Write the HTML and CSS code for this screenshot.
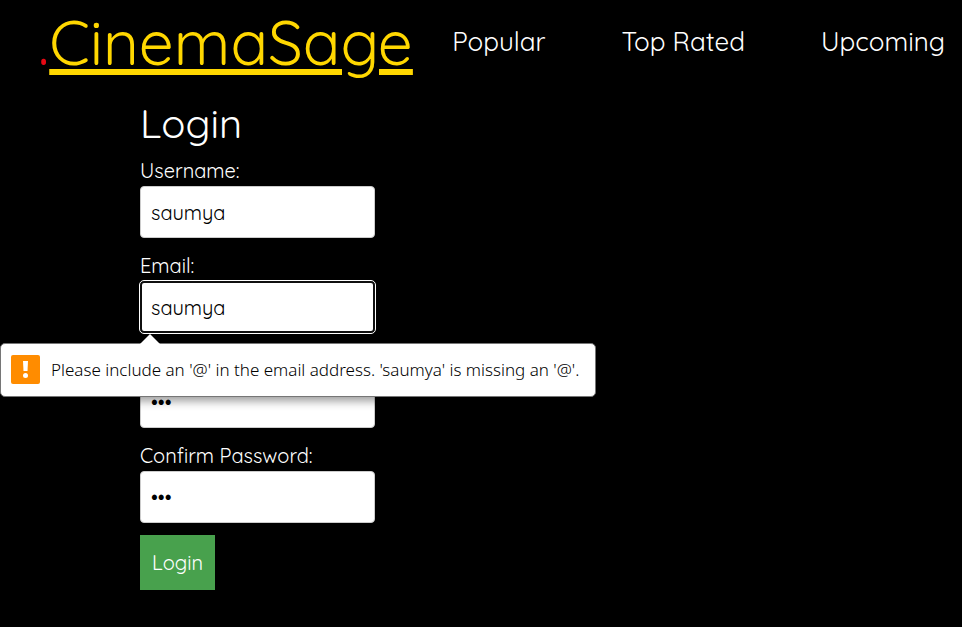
FILE: index.html
```html
<!DOCTYPE html>
<html lang="en">
<head>
<meta charset="utf-8">
<meta name="viewport" content="width=device-width, initial-scale=1">
<title>CinemaSage</title>
<link rel="stylesheet" href="styles.css">
</head>
<body>
<header class="header">
  <div class="brand"><span class="brand-dot">.</span><a class="brand-link" href="#">CinemaSage</a></div>
  <nav class="nav">
    <a href="#">Popular</a>
    <a href="#">Top Rated</a>
    <a href="#">Upcoming</a>
  </nav>
</header>
<main class="main">
  <h1 class="title">Login</h1>
  <form class="form" novalidate>
    <div class="field">
      <label for="username">Username:</label>
      <input id="username" type="text" value="saumya">
    </div>
    <div class="field">
      <label for="email">Email:</label>
      <input id="email" class="invalid" type="email" value="saumya" aria-describedby="email-hint">
      <div class="hint" id="email-hint" role="alert">
        <svg class="hint-icon" viewBox="0 0 29 29" aria-hidden="true">
          <rect width="29" height="29" rx="2" fill="#ff8c00"/>
          <path d="M12 6h5l-.5 10h-4z" fill="#fff"/>
          <circle cx="14.500" cy="20.500" r="2.500" fill="#fff"/>
        </svg>
        <span>Please include an '@' in the email address. 'saumya' is missing an '@'.</span>
      </div>
    </div>
    <div class="field covered">
      <label for="password">Password:</label>
      <input id="password" type="password" value="abc">
    </div>
    <div class="field">
      <label for="confirm">Confirm Password:</label>
      <input id="confirm" type="password" value="abc">
    </div>
    <button class="submit" type="submit">Login</button>
  </form>
</main>
</body>
</html>
```
FILE: styles.css
```css
* {
  box-sizing: border-box;
}

body {
  margin: 0;
  background: #000;
  color: #fff;
  font-family: Quicksand, Lato, sans-serif;
  font-size: 20px;
}

.header {
  display: flex;
  align-items: center;
  justify-content: space-between;
  padding: 2px 17px 0 38px;
}

.brand {
  font-size: 62px;
  line-height: 80px;
  font-weight: 400;
  white-space: nowrap;
}

.brand-dot {
  color: #e50914;
}

.brand-link {
  color: #ffd700;
  text-decoration: underline;
  text-decoration-thickness: 6px;
  text-underline-offset: 4px;
}

.nav {
  display: flex;
  gap: 76px;
  font-size: 26px;
  line-height: 32px;
  white-space: nowrap;
}

.nav a {
  color: #fff;
  text-decoration: none;
}

.main {
  padding: 17px 140px 37px;
}

.title {
  margin: 0 0 8px;
  font-size: 40px;
  line-height: 48px;
  font-weight: 400;
}

.form {
  display: flex;
  flex-direction: column;
  align-items: flex-start;
  gap: 12px;
}

.field {
  position: relative;
  display: flex;
  flex-direction: column;
}

.field label {
  line-height: 31px;
}

/* The label behind the open validation hint */
.covered label {
  visibility: hidden;
}

.field input {
  width: 235px;
  height: 52px;
  padding: 10px;
  border: 1px solid #ccc;
  border-radius: 4px;
  background: #fff;
  color: #000;
  font: inherit;
}

.field input.invalid {
  border: 2px solid #101010;
  padding: 9px;
  outline: 1px solid #fff;
}

.hint {
  position: absolute;
  z-index: 1;
  top: 93px;
  left: -140px;
  display: flex;
  align-items: center;
  gap: 11px;
  height: 54px;
  padding: 0 16px 2px 10px;
  border: 1px solid #767676;
  border-radius: 5px;
  background: #fff;
  box-shadow: 0 4px 10px rgba(0, 0, 0, 0.4);
  color: #000;
  font-family: "Segoe UI", "Noto Sans", "Open Sans", sans-serif;
  font-size: 17px;
  font-weight: 300;
  white-space: nowrap;
}

.hint::before {
  content: "";
  position: absolute;
  top: -10px;
  left: 139px;
  border: 10px solid transparent;
  border-top: 0;
  border-bottom-color: #fff;
}

.hint-icon {
  width: 29px;
  height: 29px;
}

.submit {
  padding: 12px;
  border: 0;
  background: #48a14d;
  color: #fff;
  font: inherit;
  line-height: 31px;
}
```
